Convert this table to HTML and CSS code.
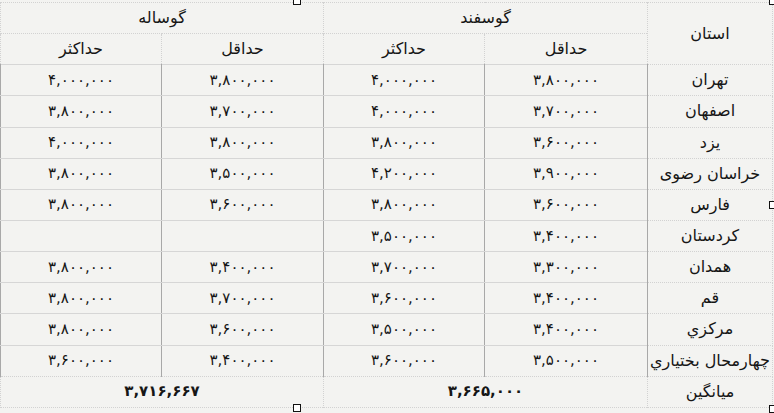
FILE: index.html
```html
<!DOCTYPE html>
<html lang="fa">
<head>
<meta charset="utf-8">
<title>جدول قیمت دام</title>
<link rel="stylesheet" href="styles.css">
</head>
<body>
<div class="sheet">
<table class="grid" dir="rtl">
<colgroup>
<col class="c-prov">
<col class="c-a">
<col class="c-b">
<col class="c-c">
<col class="c-d">
</colgroup>
<thead>
<tr>
<th rowspan="2" class="h-prov">استان</th>
<th colspan="2">گوسفند</th>
<th colspan="2">گوساله</th>
</tr>
<tr>
<th>حداقل</th>
<th>حداکثر</th>
<th>حداقل</th>
<th>حداکثر</th>
</tr>
</thead>
<tbody>
<tr><td class="prov">تهران</td><td>۳,۸۰۰,۰۰۰</td><td>۴,۰۰۰,۰۰۰</td><td>۳,۸۰۰,۰۰۰</td><td>۴,۰۰۰,۰۰۰</td></tr>
<tr><td class="prov">اصفهان</td><td>۳,۷۰۰,۰۰۰</td><td>۴,۰۰۰,۰۰۰</td><td>۳,۷۰۰,۰۰۰</td><td>۳,۸۰۰,۰۰۰</td></tr>
<tr><td class="prov">یزد</td><td>۳,۶۰۰,۰۰۰</td><td>۳,۸۰۰,۰۰۰</td><td>۳,۸۰۰,۰۰۰</td><td>۴,۰۰۰,۰۰۰</td></tr>
<tr><td class="prov">خراسان رضوی</td><td>۳,۹۰۰,۰۰۰</td><td>۴,۲۰۰,۰۰۰</td><td>۳,۵۰۰,۰۰۰</td><td>۳,۸۰۰,۰۰۰</td></tr>
<tr><td class="prov">فارس</td><td>۳,۶۰۰,۰۰۰</td><td>۳,۸۰۰,۰۰۰</td><td>۳,۶۰۰,۰۰۰</td><td>۳,۸۰۰,۰۰۰</td></tr>
<tr><td class="prov">کردستان</td><td>۳,۴۰۰,۰۰۰</td><td>۳,۵۰۰,۰۰۰</td><td></td><td></td></tr>
<tr><td class="prov">همدان</td><td>۳,۳۰۰,۰۰۰</td><td>۳,۷۰۰,۰۰۰</td><td>۳,۴۰۰,۰۰۰</td><td>۳,۸۰۰,۰۰۰</td></tr>
<tr><td class="prov">قم</td><td>۳,۴۰۰,۰۰۰</td><td>۳,۶۰۰,۰۰۰</td><td>۳,۷۰۰,۰۰۰</td><td>۳,۸۰۰,۰۰۰</td></tr>
<tr><td class="prov">مرکزي</td><td>۳,۴۰۰,۰۰۰</td><td>۳,۵۰۰,۰۰۰</td><td>۳,۶۰۰,۰۰۰</td><td>۳,۸۰۰,۰۰۰</td></tr>
<tr class="last"><td class="prov">چهارمحال بختياري</td><td>۳,۵۰۰,۰۰۰</td><td>۳,۶۰۰,۰۰۰</td><td>۳,۴۰۰,۰۰۰</td><td>۳,۶۰۰,۰۰۰</td></tr>
</tbody>
<tfoot>
<tr><td class="prov">میانگین</td><td colspan="2" class="avg">۳,۶۶۵,۰۰۰</td><td colspan="2" class="avg">۳,۷۱۶,۶۶۷</td></tr>
</tfoot>
</table>
<span class="handle h-top"></span>
<span class="handle h-tr"></span>
<span class="handle h-mr"></span>
<span class="handle h-bottom"></span>
<span class="handle h-br"></span>
</div>
</body>
</html>
```

FILE: styles.css
```css
html, body {
  margin: 0;
  padding: 0;
  background: #f3f3f1;
}

.sheet {
  position: relative;
  width: 774px;
  height: 413px;
  overflow: hidden;
  padding-top: 2px;
  box-sizing: border-box;
}

.grid {
  border-collapse: collapse;
  table-layout: fixed;
  width: 773px;
  font-family: "DejaVu Sans", sans-serif;
  color: #161616;
}

.c-prov { width: 125px; }
.c-a { width: 163px; }
.c-b { width: 161px; }
.c-c { width: 162px; }
.c-d { width: 161px; }

.grid tr { height: 31.15px; }

.grid th,
.grid td {
  padding: 0;
  text-align: center;
  vertical-align: middle;
  white-space: nowrap;
  line-height: 1;
}

.grid th {
  font-size: 16px;
  font-weight: normal;
  border: 1px dotted #d2d2d2;
}

.grid td {
  font-size: 15px;
  border-top: 1px solid #d6d6d6;
  border-bottom: 1px solid #d6d6d6;
  border-left: 1px solid #a8a8a8;
  border-right: 1px solid #a8a8a8;
}

.grid td.prov {
  font-size: 16px;
  border-top: 1px dotted #d2d2d2;
  border-bottom: 1px dotted #d2d2d2;
  border-right: 1px dotted #d2d2d2;
}

.grid tr.last td {
  border-bottom: 1px dotted #d2d2d2;
}

.grid tfoot td {
  border: 1px dotted #d2d2d2;
}

.grid tfoot td.avg {
  font-size: 15px;
  font-weight: bold;
}

.handle {
  position: absolute;
  width: 6px;
  height: 6px;
  border: 1px solid #111;
  background: #fff;
}

.h-top { left: 293px; top: -3px; }
.h-tr { left: 769px; top: -3px; }
.h-mr { left: 769px; top: 201px; }
.h-bottom { left: 293px; top: 404px; }
.h-br { left: 769px; top: 405px; }
```
